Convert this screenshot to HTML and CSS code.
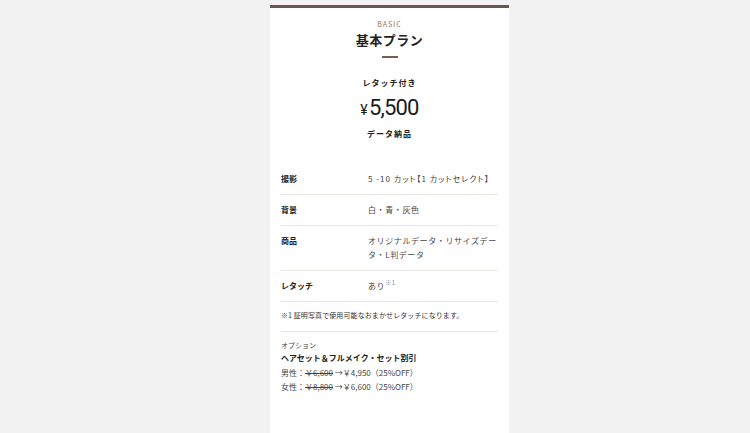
FILE: index.html
```html
<!DOCTYPE html>
<html lang="ja">
<head>
  <meta charset="UTF-8">
  <meta name="viewport" content="width=device-width, initial-scale=1.0">
  <title>基本プラン</title>
  <link rel="stylesheet" href="styles.css">
</head>
<body>
  <!-- Plan Card -->
  <div class="plan-card">
    <div class="plan-head">
      <p class="plan-en">BASIC</p>
      <h2 class="plan-title">基本プラン</h2>
      <span class="plan-bar"></span>
      <p class="plan-sub">レタッチ付き</p>
      <p class="plan-price"><span class="yen">¥</span>5,500</p>
      <p class="plan-sub">データ納品</p>
    </div>

    <!-- Details -->
    <dl class="plan-table">
      <div class="plan-row">
        <dt>撮影</dt>
        <dd class="tight">5 -10 カット【1 カットセレクト】</dd>
      </div>
      <div class="plan-row">
        <dt>背景</dt>
        <dd>白・青・灰色</dd>
      </div>
      <div class="plan-row">
        <dt>商品</dt>
        <dd>オリジナルデータ・リサイズデータ・L判データ</dd>
      </div>
      <div class="plan-row">
        <dt>レタッチ</dt>
        <dd>あり<sup>※1</sup></dd>
      </div>
    </dl>

    <p class="plan-note">※1 証明写真で使用可能なおまかせレタッチになります。</p>

    <!-- Option -->
    <div class="plan-option">
      <p class="option-label">オプション</p>
      <p class="option-title">ヘアセット＆フルメイク・セット割引</p>
      <p class="option-line">男性：<s>￥6,600</s> →￥4,950（25%OFF）</p>
      <p class="option-line">女性：<s>￥8,800</s> →￥6,600（25%OFF）</p>
    </div>
  </div>
</body>
</html>
```

FILE: styles.css
```css
/* General */
body {
  margin: 0;
  background: #f2f2f2;
  font-family: "Noto Sans CJK JP", "Noto Sans", sans-serif;
  color: #222;
}

p, h2, dl, dd {
  margin: 0;
}

/* Card */
.plan-card {
  width: 239px;
  margin: 5px 0 0 270px;
  padding: 0 11px 40px;
  box-sizing: border-box;
  background: #fff;
  border-top: 3px solid #6b5750;
}

.plan-head {
  display: flex;
  flex-direction: column;
  align-items: center;
  padding-top: 11px;
}

.plan-en {
  font-size: 7px;
  letter-spacing: 1px;
  color: #8b6f66;
  line-height: 10px;
}

.plan-title {
  font-size: 13px;
  font-weight: bold;
  line-height: 20px;
  margin-top: 1px;
  letter-spacing: 0.5px;
}

.plan-bar {
  width: 16px;
  height: 2px;
  background: #7b5e52;
  margin-top: 6px;
}

.plan-sub {
  font-size: 8px;
  font-weight: bold;
  letter-spacing: 1px;
  line-height: 12px;
  margin-top: 19px;
}

.plan-price {
  font-family: Roboto, "Noto Sans", sans-serif;
  font-size: 22px;
  line-height: 28px;
  margin-top: 5px;
  letter-spacing: -0.8px;
  color: #1a1a1a;
}

.plan-price + .plan-sub {
  margin-top: 4px;
}

.yen {
  font-size: 14px;
  margin-right: 2px;
}

/* Table */
.plan-table {
  margin-top: 24px;
}

.plan-row {
  display: flex;
  padding: 8px 0;
  border-bottom: 1px solid #e8e6e0;
  font-size: 8px;
  line-height: 14px;
  letter-spacing: 0.6px;
}

.plan-row dt {
  width: 87px;
  flex-shrink: 0;
  font-weight: bold;
  letter-spacing: 0;
}

.plan-row dd {
  flex: 1;
  color: #444;
}

.plan-row dd.tight {
  font-feature-settings: "palt";
  letter-spacing: 1px;
}

.plan-row sup {
  font-size: 6px;
  color: #888;
  vertical-align: 4px;
  line-height: 0;
}

.plan-note {
  font-size: 7px;
  line-height: 12px;
  letter-spacing: 0.1px;
  padding: 7px 0 10px;
  border-bottom: 1px solid #e8e6e0;
  color: #333;
}

/* Option */
.plan-option {
  padding-top: 8px;
  font-size: 8px;
  line-height: 14px;
}

.option-label {
  font-size: 7px;
  line-height: 10px;
  color: #444;
}

.option-title {
  font-weight: bold;
  line-height: 16px;
  color: #222;
}

.option-line {
  color: #444;
}
```
